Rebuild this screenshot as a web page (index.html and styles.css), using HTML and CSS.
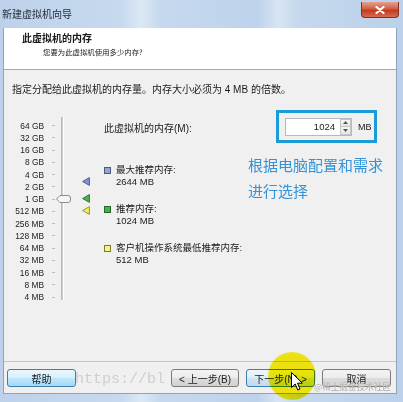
FILE: index.html
```html
<!DOCTYPE html>
<html lang="zh-CN">
<head>
  <meta charset="UTF-8" />
  <title>新建虚拟机向导</title>
  <link rel="stylesheet" href="styles.css">
</head>
<body>

  <div class="window">
    <div class="titlebar">
      <span class="title">新建虚拟机向导</span>
      <button class="close-btn">
        <svg width="10" height="8" viewBox="0 0 10 8"><path d="M1.5 1 L8.5 7 M8.5 1 L1.5 7" stroke="#fff" stroke-width="2.2" stroke-linecap="round"/></svg>
      </button>
    </div>

    <div class="client">
      <div class="header">
        <h1>此虚拟机的内存</h1>
        <p>您要为此虚拟机使用多少内存?</p>
      </div>

      <div class="content">
        <p class="intro">指定分配给此虚拟机的内存量。内存大小必须为 4 MB 的倍数。</p>

        <div class="main">
          <div class="scale">
            <div class="scale-row"><span class="scale-label">64 GB</span><i class="tick"></i></div>
            <div class="scale-row"><span class="scale-label">32 GB</span><i class="tick"></i></div>
            <div class="scale-row"><span class="scale-label">16 GB</span><i class="tick"></i></div>
            <div class="scale-row"><span class="scale-label">8 GB</span><i class="tick"></i></div>
            <div class="scale-row"><span class="scale-label">4 GB</span><i class="tick"></i></div>
            <div class="scale-row"><span class="scale-label">2 GB</span><i class="tick"></i></div>
            <div class="scale-row"><span class="scale-label">1 GB</span><i class="tick"></i></div>
            <div class="scale-row"><span class="scale-label">512 MB</span><i class="tick"></i></div>
            <div class="scale-row"><span class="scale-label">256 MB</span><i class="tick"></i></div>
            <div class="scale-row"><span class="scale-label">128 MB</span><i class="tick"></i></div>
            <div class="scale-row"><span class="scale-label">64 MB</span><i class="tick"></i></div>
            <div class="scale-row"><span class="scale-label">32 MB</span><i class="tick"></i></div>
            <div class="scale-row"><span class="scale-label">16 MB</span><i class="tick"></i></div>
            <div class="scale-row"><span class="scale-label">8 MB</span><i class="tick"></i></div>
            <div class="scale-row"><span class="scale-label">4 MB</span><i class="tick"></i></div>

            <div class="track"></div>
            <svg class="thumb" width="15" height="8" viewBox="0 0 15 8">
              <path d="M0.5 4 L4 0.5 H12 Q14.5 0.5 14.5 3 V5 Q14.5 7.5 12 7.5 H4 Z" fill="#f6f6f6" stroke="#8c8c8c"/>
            </svg>
            <svg class="marker marker-max" width="8" height="9" viewBox="0 0 8 9">
              <path d="M0.6 4.5 L7.4 0.6 V8.4 Z" fill="#8594d4" stroke="#46508a" stroke-width="0.9"/>
            </svg>
            <svg class="marker marker-rec" width="8" height="9" viewBox="0 0 8 9">
              <path d="M0.6 4.5 L7.4 0.6 V8.4 Z" fill="#4fb24f" stroke="#2b6b2b" stroke-width="0.9"/>
            </svg>
            <svg class="marker marker-min" width="8" height="9" viewBox="0 0 8 9">
              <path d="M0.6 4.5 L7.4 0.6 V8.4 Z" fill="#f1ec5a" stroke="#8e8a2c" stroke-width="0.9"/>
            </svg>
          </div>

          <div class="settings">
            <div class="mem-row">
              <label>此虚拟机的内存(M):</label>
              <div class="highlight">
                <div class="spin-input">
                  <span class="value">1024</span>
                  <span class="spinner">
                    <span class="spin-btn"><svg width="5" height="3" viewBox="0 0 5 3"><path d="M0 3 L2.5 0 L5 3 Z" fill="#555"/></svg></span>
                    <span class="spin-btn"><svg width="5" height="3" viewBox="0 0 5 3"><path d="M0 0 L2.5 3 L5 0 Z" fill="#555"/></svg></span>
                  </span>
                </div>
                <span class="unit">MB</span>
              </div>
            </div>

            <ul class="legend">
              <li><i class="swatch swatch-max"></i><span>最大推荐内存:<br>2644 MB</span></li>
              <li><i class="swatch swatch-rec"></i><span>推荐内存:<br>1024 MB</span></li>
              <li><i class="swatch swatch-min"></i><span>客户机操作系统最低推荐内存:<br>512 MB</span></li>
            </ul>

            <div class="note">根据电脑配置和需求<br>进行选择</div>
          </div>
        </div>
      </div>

      <div class="footer">
        <button class="btn btn-help">帮助</button>
        <span class="spacer"></span>
        <button class="btn btn-back">&lt; 上一步(B)</button>
        <button class="btn btn-default">下一步(N) &gt;</button>
        <button class="btn">取消</button>
      </div>
    </div>

    <div class="watermark">https://bl</div>
    <div class="credit">@稀土掘金技术社区</div>
    <div class="click-spot"></div>
    <svg class="cursor" width="12" height="19" viewBox="0 0 12 19">
      <path d="M0.5 0.5 V15.5 L4.2 12 L6.8 18 L9 17 L6.5 11.2 H11.3 Z" fill="#fff" stroke="#000" stroke-width="1" stroke-linejoin="round"/>
    </svg>
  </div>

</body>
</html>
```

FILE: styles.css
```css
body {
  margin: 0;
  font-family: "Liberation Sans", "Noto Sans CJK SC", sans-serif;
  color: #1b1b1b;
}
.window {
  position: relative;
  width: 403px;
  height: 402px;
  overflow: hidden;
  background: linear-gradient(90deg, #bdd2ea 0%, #c6d9ee 30%, #dce8f5 35%, #c5d8ee 40%, #bed3eb 64%, #d8e5f3 69%, #c5d8ed 74%, #bbd1ea 100%);
  display: flex;
  flex-direction: column;
}
.titlebar {
  height: 28px;
  display: flex;
  align-items: flex-start;
  flex-shrink: 0;
}
.title {
  margin: 8px 0 0 2px;
  font-family: "Noto Sans CJK SC", sans-serif;
  font-size: 10px;
  line-height: 12px;
  color: #1e2a38;
}
.close-btn {
  margin: 2px 4px 0 auto;
  width: 38px;
  height: 16px;
  padding: 0;
  border: 1px solid #7c3426;
  border-top: none;
  border-radius: 0 0 4px 4px;
  background: linear-gradient(#e6a08f, #d35e44 45%, #c23b22 55%, #d66a4d);
  display: flex;
  align-items: center;
  justify-content: center;
}
.client {
  height: 366px;
  margin: 0 6px 0 3px;
  box-sizing: border-box;
  border: 1px solid #8fa2ba;
  border-top: none;
  background: #f0f0f0;
  display: flex;
  flex-direction: column;
}
.header {
  height: 41px;
  background: #fff;
  border-bottom: 1px solid #a8a8a8;
  padding-left: 18px;
  flex-shrink: 0;
}
.header h1 {
  margin: 0;
  padding-top: 3.5px;
  font-family: "Noto Sans CJK SC", sans-serif;
  font-size: 10px;
  font-weight: bold;
  line-height: 12px;
}
.header p {
  margin: 3px 0 0 21px;
  font-family: "Noto Sans CJK SC", sans-serif;
  font-size: 7.4px;
  line-height: 10px;
}
.content {
  padding-left: 8px;
}
.intro {
  margin: 14px 0 0;
  font-size: 10px;
  line-height: 12px;
}
.main {
  margin-top: 14px;
  display: flex;
  align-items: flex-start;
}
.scale {
  position: relative;
  width: 80px;
  margin-top: 9.6px;
  flex-shrink: 0;
}
.scale-row {
  height: 12.26px;
  display: flex;
  align-items: center;
}
.scale-label {
  width: 32px;
  text-align: right;
  font-size: 8.4px;
  white-space: nowrap;
  color: #222;
}
.tick {
  margin-left: 8px;
  width: 3px;
  height: 1px;
  background: #bcbcbc;
}
.track {
  position: absolute;
  left: 49px;
  top: -3px;
  width: 1px;
  height: 183px;
  background: #cfcfcf;
  border-right: 1px solid #fff;
  border-left: 1px solid #b8b8b8;
}
.thumb {
  position: absolute;
  left: 44px;
  top: 75.4px;
}
.marker {
  position: absolute;
  left: 70px;
}
.marker-max { top: 57px; }
.marker-rec { top: 74.6px; }
.marker-min { top: 86.6px; }
.settings {
  position: relative;
  flex: 1;
  margin-left: 12px;
  padding-right: 19px;
}
.mem-row {
  height: 33px;
  display: flex;
  align-items: center;
  justify-content: space-between;
}
.mem-row label {
  font-size: 10px;
  margin-top: 1px;
}
.highlight {
  box-sizing: border-box;
  width: 101px;
  height: 33px;
  border: 3px solid #1a9cd8;
  display: flex;
  align-items: center;
  padding-left: 6px;
}
.spin-input {
  box-sizing: border-box;
  width: 67px;
  height: 18px;
  border: 1px solid #b5b9c2;
  background: #fff;
  display: flex;
  align-items: center;
  justify-content: flex-end;
}
.value {
  font-size: 9.5px;
  padding-right: 5px;
}
.spinner {
  width: 11px;
  height: 16px;
  display: flex;
  flex-direction: column;
}
.spin-btn {
  flex: 1;
  display: flex;
  align-items: center;
  justify-content: center;
  border: 1px solid #c6c6c6;
  background: linear-gradient(#f8f8f8, #e4e4e4);
}
.spin-btn + .spin-btn {
  border-top: none;
}
.unit {
  margin-left: 6px;
  font-size: 9px;
}
.legend {
  list-style: none;
  margin: 21px 0 0;
  padding: 0;
}
.legend li {
  display: flex;
  align-items: flex-start;
  font-size: 9.5px;
  line-height: 12px;
}
.legend li + li {
  margin-top: 15px;
}
.swatch {
  box-sizing: border-box;
  width: 7px;
  height: 7px;
  margin-top: 3px;
  margin-right: 5px;
  border: 1px solid;
}
.swatch-max { background: #92a6cc; border-color: #4b5a7e; }
.swatch-rec { background: #46b446; border-color: #25652a; }
.swatch-min { background: #f6f284; border-color: #7e7a28; }
.note {
  position: absolute;
  left: 144px;
  top: 42px;
  font-family: "Noto Sans CJK SC", sans-serif;
  font-size: 15px;
  line-height: 26px;
  color: #3493d6;
  white-space: nowrap;
}
.footer {
  margin-top: auto;
  border-top: 1px solid #c4c4c4;
  padding: 7px 5px 6px 3px;
  display: flex;
  gap: 7px;
}
.spacer {
  flex: 1;
}
.btn {
  box-sizing: border-box;
  width: 69px;
  height: 18px;
  padding: 0;
  border: 1px solid #7a7a7a;
  border-radius: 3px;
  background: linear-gradient(#f4f4f4, #ececec 48%, #dddddd 52%, #d2d2d2);
  font-family: "Liberation Sans", "Noto Sans CJK SC", sans-serif;
  font-size: 10px;
  color: #1b1b1b;
}
.btn-back {
  width: 68px;
}
.btn-help {
  border-color: #3c7fb1;
  background: linear-gradient(#eaf6fd, #d9f0fc 48%, #bee6fd 52%, #a7d9f5);
}
.btn-default {
  border-color: #3c7fb1;
  background: linear-gradient(#eef6fb, #e1eef7 48%, #cfe3f1 52%, #c2dbed);
}
.watermark {
  position: absolute;
  left: 75px;
  top: 371px;
  font-family: "Liberation Mono", monospace;
  font-size: 15px;
  color: rgba(130, 130, 130, 0.3);
  white-space: nowrap;
}
.credit {
  position: absolute;
  left: 314px;
  top: 380px;
  font-family: "Noto Sans CJK SC", sans-serif;
  font-size: 8.6px;
  line-height: 12px;
  color: #a6a6a6;
  text-shadow: 0 0 1px #fff;
  white-space: nowrap;
}
.click-spot {
  position: absolute;
  left: 268px;
  top: 352px;
  width: 48px;
  height: 48px;
  border-radius: 50%;
  background: radial-gradient(circle, rgba(250, 238, 0, 0.95) 62%, rgba(250, 238, 0, 0.55) 86%, rgba(250, 238, 0, 0) 100%);
  mix-blend-mode: multiply;
}
.cursor {
  position: absolute;
  left: 291px;
  top: 372px;
}
```
